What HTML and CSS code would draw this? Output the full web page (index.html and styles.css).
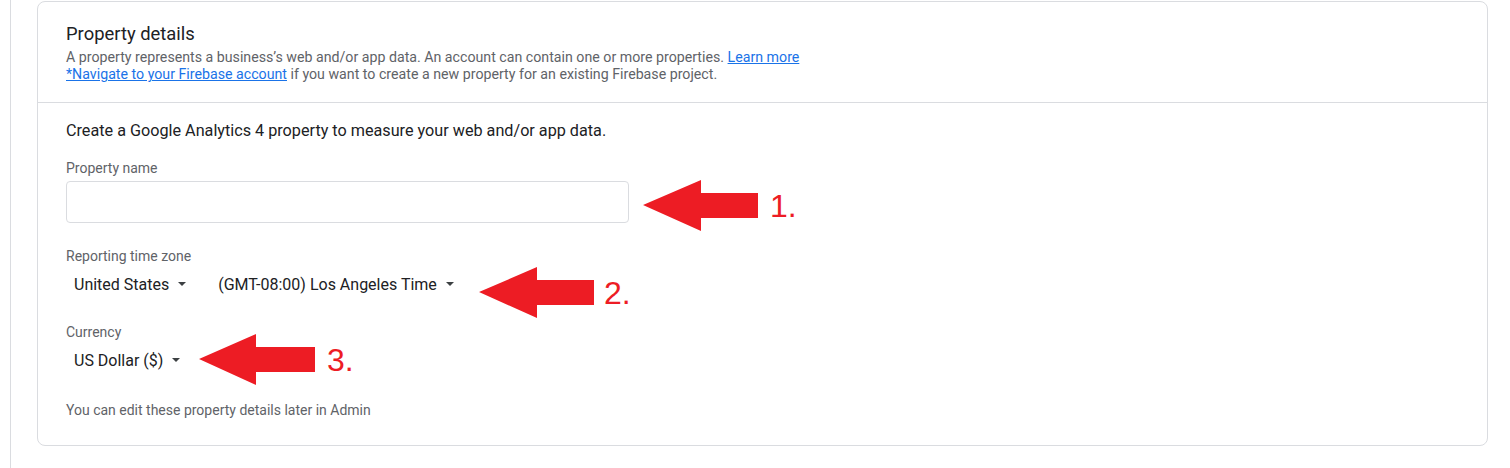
FILE: index.html
```html
<!DOCTYPE html>
<html lang="en">
<head>
<meta charset="utf-8">
<title>Property details</title>
<link rel="stylesheet" href="styles.css">
</head>
<body>
<div class="page">
  <div class="rail">
    <section class="card">
      <header class="card-head">
        <h2 class="title">Property details</h2>
        <p class="desc">A property represents a business’s web and/or app data. An account can contain one or more properties. <a href="#" class="link">Learn more</a></p>
        <p class="desc"><a href="#" class="link">*Navigate to your Firebase account</a> if you want to create a new property for an existing Firebase project.</p>
      </header>
      <div class="card-body">
        <p class="intro">Create a Google Analytics 4 property to measure your web and/or app data.</p>
        <div class="field f1">
          <label class="label">Property name</label>
          <div class="input"></div>
        </div>
        <div class="field f2">
          <label class="label">Reporting time zone</label>
          <div class="selects">
            <button class="select">United States <span class="caret"></span></button>
            <button class="select">(GMT-08:00) Los Angeles Time <span class="caret"></span></button>
          </div>
        </div>
        <div class="field f3">
          <label class="label">Currency</label>
          <div class="selects">
            <button class="select">US Dollar ($) <span class="caret"></span></button>
          </div>
        </div>
        <p class="note">You can edit these property details later in Admin</p>
      </div>
    </section>
  </div>

  <div class="annot a1">
    <svg class="arrow" width="115" height="51" viewBox="0 0 115 51"><polygon points="0,25 58,0 58,13 115,13 115,38 58,38 58,51"/></svg>
    <span class="num">1.</span>
  </div>
  <div class="annot a2">
    <svg class="arrow" width="115" height="51" viewBox="0 0 115 51"><polygon points="0,25 58,0 58,13 115,13 115,38 58,38 58,51"/></svg>
    <span class="num">2.</span>
  </div>
  <div class="annot a3">
    <svg class="arrow" width="116" height="51" viewBox="0 0 116 51"><polygon points="0,25 57,0 57,13 116,13 116,38 57,38 57,51"/></svg>
    <span class="num">3.</span>
  </div>
</div>
</body>
</html>
```

FILE: styles.css
```css
* { box-sizing: border-box; }
html, body { margin: 0; padding: 0; background: #fff; }
body { font-family: Roboto, "Liberation Sans", Arial, sans-serif; color: #202124; }

.page { position: relative; width: 1510px; height: 468px; overflow: hidden; }

.rail {
  margin-left: 10px;
  height: 468px;
  border-left: 1px solid #dadce0;
  padding: 1px 0 0 26px;
}

.card {
  width: 1451px;
  border: 1px solid #dadce0;
  border-radius: 8px;
  background: #fff;
}

.card-head {
  padding: 20px 28px 19px;
  border-bottom: 1px solid #dadce0;
}
.title {
  margin: 0 0 3px;
  font-size: 18.4px;
  line-height: 24px;
  font-weight: 400;
  color: #202124;
}
.desc {
  margin: 0;
  font-size: 14.2px;
  line-height: 17px;
  color: #5f6368;
}
.link { color: #1a73e8; text-decoration: underline; }

.card-body { padding: 18px 28px 26px; }
.intro {
  margin: 0;
  font-size: 16.2px;
  line-height: 20px;
  color: #202124;
}
.field { margin-top: 19px; }
.f2 { margin-top: 25px; }
.f3 { margin-top: 24px; }
.label {
  display: block;
  font-size: 14px;
  line-height: 16px;
  color: #5f6368;
}
.input {
  margin-top: 5px;
  width: 563px;
  height: 42px;
  border: 1px solid #dadce0;
  border-radius: 4px;
}
.selects { display: flex; gap: 16px; margin-top: 4px; }
.select {
  display: flex;
  align-items: center;
  gap: 9px;
  height: 32px;
  padding: 0 8px;
  border: 0;
  background: transparent;
  font-family: inherit;
  font-size: 16px;
  color: #202124;
}
.caret {
  width: 0; height: 0;
  border-left: 4px solid transparent;
  border-right: 4px solid transparent;
  border-top: 4px solid #3c4043;
}
.note {
  margin: 25px 0 0;
  font-size: 14px;
  line-height: 18px;
  color: #5f6368;
}

.annot {
  position: absolute;
  display: flex;
  align-items: center;
  gap: 12px;
}
.arrow { fill: #ed1c24; display: block; }
.num {
  font-family: "Liberation Sans", Arial, sans-serif;
  font-size: 32px;
  line-height: 40px;
  color: #ed1c24;
}
.a1 { left: 643px; top: 180px; }
.a2 { left: 479px; top: 267px; gap: 10px; }
.a3 { left: 199px; top: 334px; }
```
